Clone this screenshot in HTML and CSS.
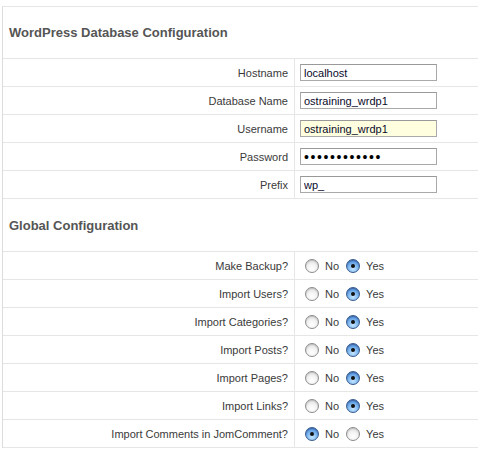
FILE: index.html
```html
<!DOCTYPE html>
<html>
<head>
<meta charset="utf-8">
<link rel="stylesheet" href="styles.css">
</head>
<body>
<div class="panel">
  <div class="section-title first">WordPress Database Configuration</div>
  <div class="row"><div class="label">Hostname</div><div class="field"><input class="text" type="text" value="localhost"></div></div>
  <div class="row"><div class="label">Database Name</div><div class="field"><input class="text" type="text" value="ostraining_wrdp1"></div></div>
  <div class="row"><div class="label">Username</div><div class="field"><input class="text focus" type="text" value="ostraining_wrdp1"></div></div>
  <div class="row"><div class="label">Password</div><div class="field"><input class="text pw" type="password" value="ostraining12"></div></div>
  <div class="row"><div class="label">Prefix</div><div class="field"><input class="text" type="text" value="wp_"></div></div>

  <div class="section-title second">Global Configuration</div>
  <div class="row"><div class="label">Make Backup?</div><div class="field radios"><span class="radio"></span><span class="opt">No</span><span class="radio on"></span><span class="opt">Yes</span></div></div>
  <div class="row"><div class="label">Import Users?</div><div class="field radios"><span class="radio"></span><span class="opt">No</span><span class="radio on"></span><span class="opt">Yes</span></div></div>
  <div class="row"><div class="label">Import Categories?</div><div class="field radios"><span class="radio"></span><span class="opt">No</span><span class="radio on"></span><span class="opt">Yes</span></div></div>
  <div class="row"><div class="label">Import Posts?</div><div class="field radios"><span class="radio"></span><span class="opt">No</span><span class="radio on"></span><span class="opt">Yes</span></div></div>
  <div class="row"><div class="label">Import Pages?</div><div class="field radios"><span class="radio"></span><span class="opt">No</span><span class="radio on"></span><span class="opt">Yes</span></div></div>
  <div class="row"><div class="label">Import Links?</div><div class="field radios"><span class="radio"></span><span class="opt">No</span><span class="radio on"></span><span class="opt">Yes</span></div></div>
  <div class="row"><div class="label">Import Comments in JomComment?</div><div class="field radios"><span class="radio on"></span><span class="opt">No</span><span class="radio"></span><span class="opt">Yes</span></div></div>
</div>
</body>
</html>
```
FILE: styles.css
```css
html, body {
  margin: 0;
  padding: 0;
  background: #fff;
}
body {
  font-family: "Liberation Sans", Arial, sans-serif;
  font-size: 11px;
  color: #444;
}
.panel {
  margin: 6px 0 0 2px;
  border-left: 1px solid #dcdcdc;
  border-top: 1px solid #e6e6e6;
}
.section-title {
  display: flex;
  align-items: center;
  padding-left: 6px;
  font-weight: bold;
  font-size: 13px;
  color: #555;
  border-bottom: 1px solid #e6e6e6;
}
.section-title.first {
  height: 51px;
}
.section-title.second {
  height: 52px;
}
.row {
  display: grid;
  grid-template-columns: 292px 1fr;
  height: 27px;
  border-bottom: 1px solid #e6e6e6;
}
.label {
  display: flex;
  align-items: center;
  justify-content: flex-end;
  padding-right: 6px;
  border-right: 1px solid #e6e6e6;
  color: #3a3a3a;
  font-size: 11px;
}
.field {
  display: flex;
  align-items: center;
  padding-left: 5px;
}
.text {
  box-sizing: border-box;
  width: 137px;
  height: 17px;
  margin: 0;
  padding: 0 3px;
  border: 1px solid #a9a9a9;
  border-top-color: #999;
  font-family: "Liberation Sans", Arial, sans-serif;
  font-size: 11px;
  color: #0a0a2a;
  background: #fff;
  outline: none;
}
.text.focus {
  background: #ffffe0;
}
.text.pw {
  font-size: 14px;
  letter-spacing: 1.6px;
  color: #000;
}
.radios {
  padding-left: 10px;
}
.radio {
  box-sizing: border-box;
  width: 14px;
  height: 14px;
  border-radius: 50%;
  border: 1px solid #8c8c8c;
  background: radial-gradient(circle at 50% 70%, #ffffff 0%, #f4f4f4 40%, #d4d4d4 100%);
  box-shadow: inset 0 1px 1px rgba(0,0,0,0.15);
  position: relative;
  flex: none;
}
.radio.on {
  border-color: #36598c;
  background: radial-gradient(circle at 50% 75%, #c6e6ff 0%, #7db8f0 45%, #3b78d0 100%);
  box-shadow: inset 0 1px 1px rgba(0,0,40,0.3);
}
.radio.on::after {
  content: "";
  position: absolute;
  left: 4px;
  top: 4px;
  width: 4px;
  height: 4px;
  border-radius: 50%;
  background: #111;
}
.opt {
  margin-left: 6px;
  margin-right: 7px;
  font-size: 11px;
  color: #3a3a3a;
}
```
